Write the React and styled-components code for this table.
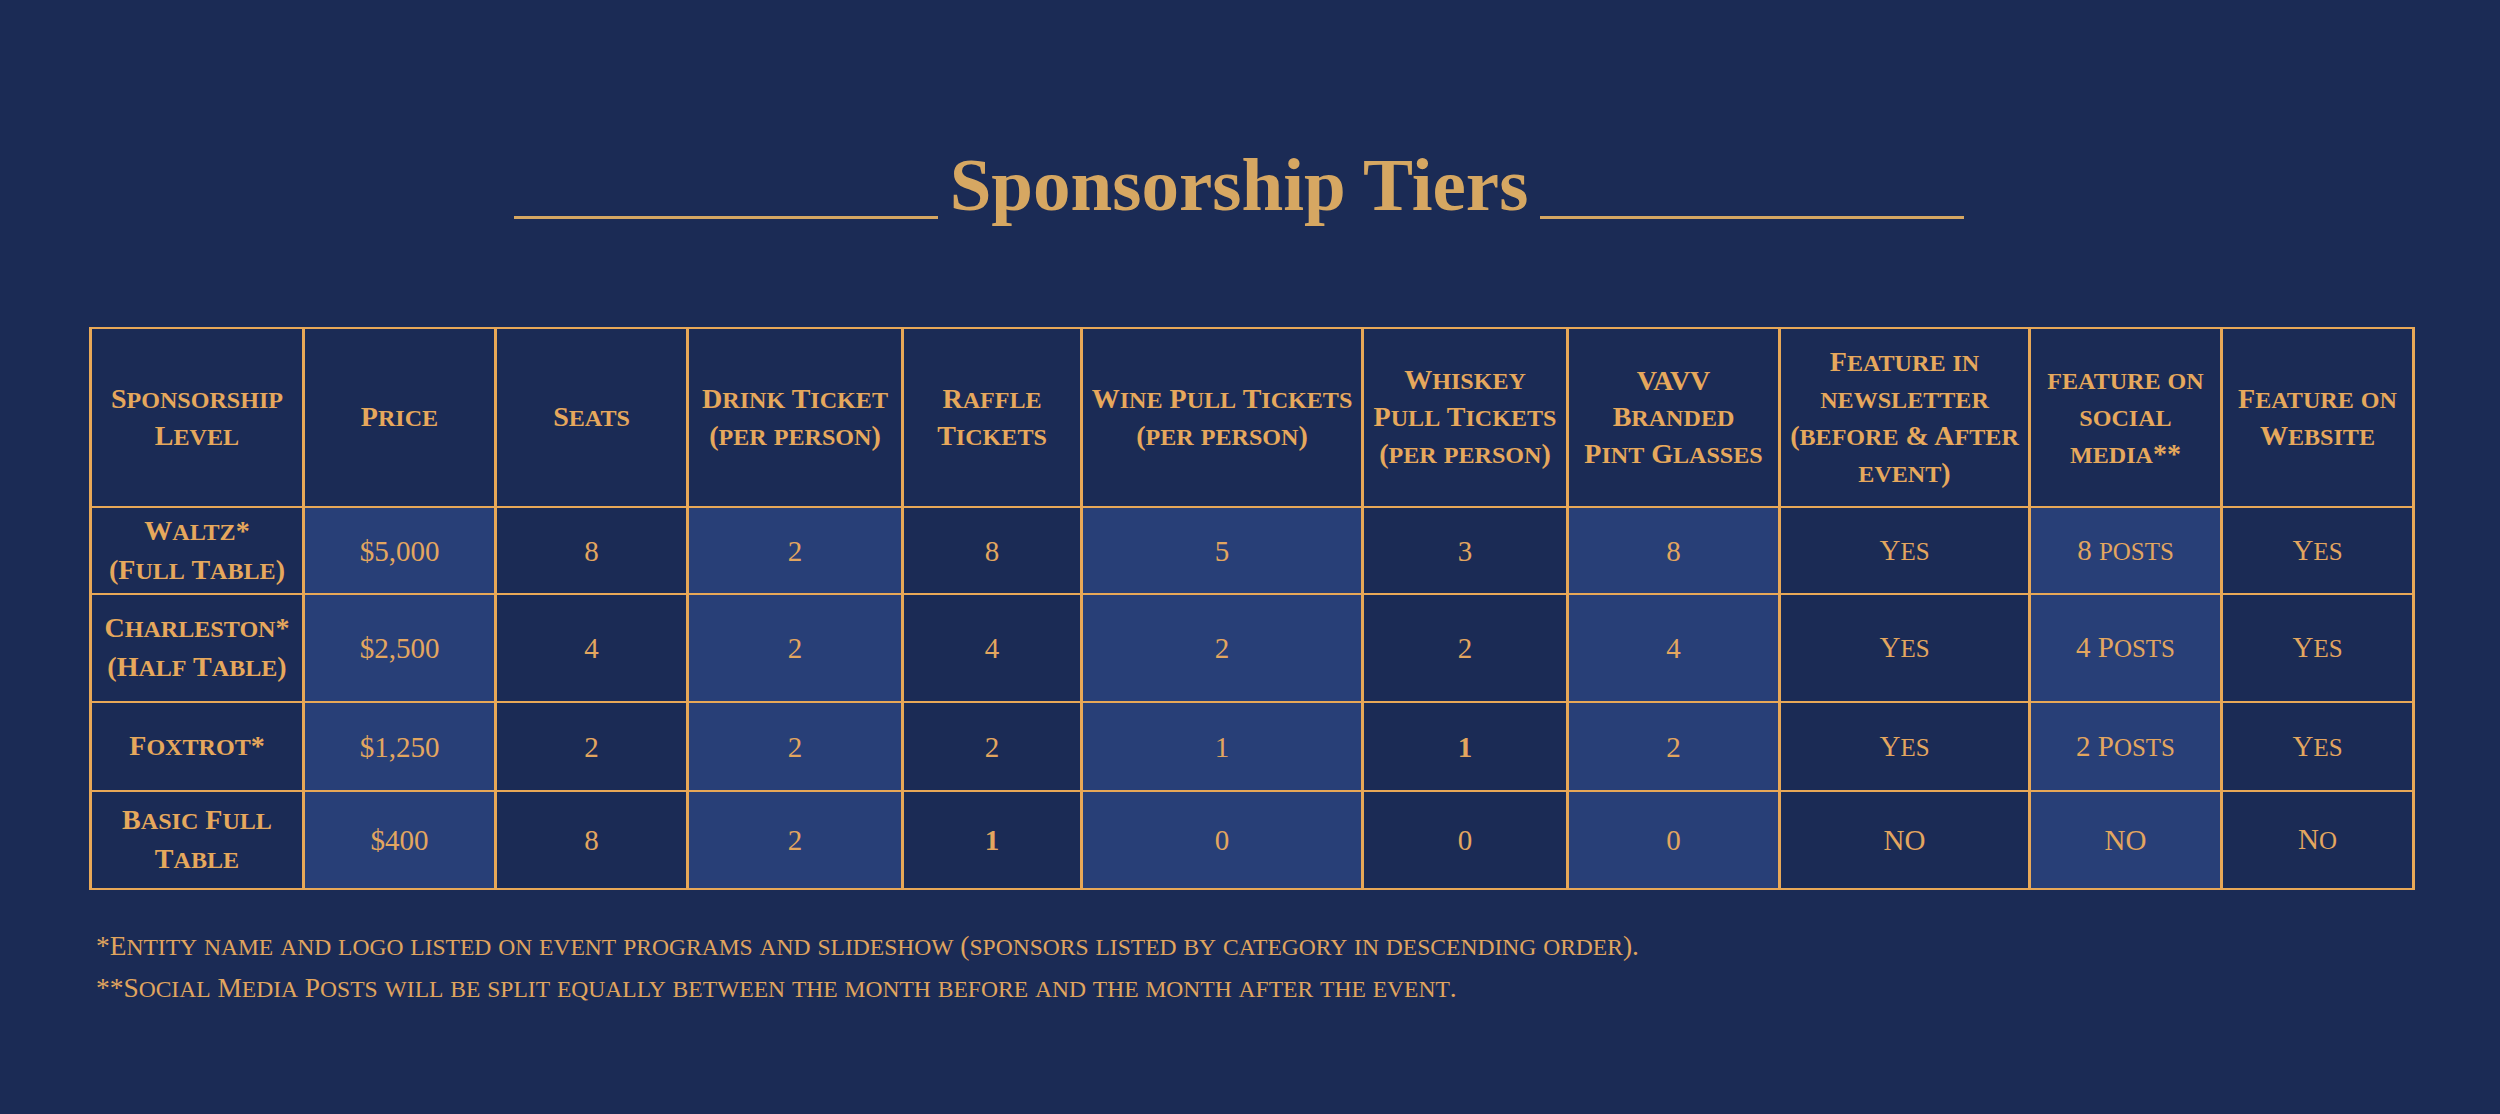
import React from 'react';
import styled, { createGlobalStyle } from 'styled-components';

const GlobalStyle = createGlobalStyle`
  html, body {
    margin: 0;
    padding: 0;
    background: #1b2b55;
  }
  body {
    font-family: "Liberation Serif", "Times New Roman", serif;
    color: #e6a85c;
  }
`;

const Page = styled.div`
  width: 2500px;
  min-height: 1114px;
  display: flex;
  flex-direction: column;
  background: #1b2b55;
`;

const TitleRow = styled.div`
  margin-top: 147px;
  padding-right: 22px;
  display: flex;
  justify-content: center;
  align-items: flex-end;
  gap: 12px;
`;

const Rule = styled.div`
  width: 424px;
  height: 3px;
  margin-bottom: 3px;
  background: #d6a762;
`;

const Title = styled.h1`
  margin: 0;
  font-family: "Liberation Serif", serif;
  font-weight: 700;
  font-size: 75px;
  line-height: 75px;
  color: #d6a762;
  white-space: nowrap;
`;

const Grid = styled.div`
  margin: 105px 0 0 89px;
  width: max-content;
  display: grid;
  grid-template-columns: 210px 189px 189px 212px 176px 278px 202px 209px 247px 189px 189px;
  grid-template-rows: 177px 85px 106px 87px 96px;
  gap: 2px 3px;
  padding: 2px 3px;
  background: #e8a857;
`;

const Cell = styled.div`
  display: flex;
  flex-direction: column;
  align-items: center;
  justify-content: center;
  text-align: center;
  white-space: nowrap;
  overflow: hidden;
  background: ${p => (p.$light ? '#283f77' : '#1b2b55')};
  color: #e6a85c;
`;

const HeadCell = styled(Cell)`
  font-weight: 700;
  font-size: 28px;
  line-height: 36px;
`;

const LevelCell = styled(Cell)`
  font-weight: 700;
  font-size: 28px;
  line-height: 38px;
`;

const DataCell = styled(Cell)`
  font-weight: ${p => (p.$bold ? 700 : 400)};
  font-size: 29px;
  line-height: 36px;
  color: #e3a65f;
`;

const Small = styled.span`
  font-size: 0.86em;
  text-transform: uppercase;
`;

const Notes = styled.div`
  margin: 36px 0 0 96px;
  font-size: 27.4px;
  line-height: 41px;
  color: #e0a55e;
`;

const Note = styled.p`
  margin: 0;
  white-space: nowrap;
`;

// capitals stay full size, lowercase runs become small capitals
const Caps = ({ text }) =>
  text.split(/([a-z]+)/).map((part, i) =>
    i % 2 ? <Small key={i}>{part}</Small> : <React.Fragment key={i}>{part}</React.Fragment>
  );

const Lines = ({ lines }) =>
  lines.map((l, i) => (
    <div key={i}>
      <Caps text={l} />
    </div>
  ));

const headers = [
  ['Sponsorship', 'Level'],
  ['Price'],
  ['Seats'],
  ['Drink Ticket', '(per person)'],
  ['Raffle', 'Tickets'],
  ['Wine Pull Tickets', '(per person)'],
  ['Whiskey', 'Pull Tickets', '(per person)'],
  ['VAVV', 'Branded', 'Pint Glasses'],
  ['Feature in', 'newsletter', '(before & After', 'event)'],
  ['feature on', 'social', 'media**'],
  ['Feature on', 'Website'],
];

const rows = [
  {
    level: ['Waltz*', '(Full Table)'],
    cells: ['$5,000', '8', '2', '8', '5', '3', '8', 'Yes', '8 posts', 'Yes'],
  },
  {
    level: ['Charleston*', '(Half Table)'],
    cells: ['$2,500', '4', '2', '4', '2', '2', '4', 'Yes', '4 Posts', 'Yes'],
  },
  {
    level: ['Foxtrot*'],
    cells: ['$1,250', '2', '2', '2', '1', '1', '2', 'Yes', '2 Posts', 'Yes'],
    bold: [5],
  },
  {
    level: ['Basic Full', 'Table'],
    cells: ['$400', '8', '2', '1', '0', '0', '0', 'NO', 'NO', 'No'],
    bold: [3],
  },
];

export default function App() {
  return (
    <Page>
      <GlobalStyle />
      <TitleRow>
        <Rule />
        <Title>Sponsorship Tiers</Title>
        <Rule />
      </TitleRow>

      <Grid>
        {headers.map((h, i) => (
          <HeadCell key={'h' + i}>
            <Lines lines={h} />
          </HeadCell>
        ))}
        {rows.map((r, ri) => (
          <React.Fragment key={ri}>
            <LevelCell>
              <Lines lines={r.level} />
            </LevelCell>
            {r.cells.map((c, ci) => (
              <DataCell
                key={ci}
                $light={ci % 2 === 0}
                $bold={r.bold && r.bold.includes(ci)}
              >
                <div>
                  <Caps text={c} />
                </div>
              </DataCell>
            ))}
          </React.Fragment>
        ))}
      </Grid>

      <Notes>
        <Note>
          <Caps text="*Entity name and logo listed on event programs and slideshow (sponsors listed by category in descending order)." />
        </Note>
        <Note>
          <Caps text="**Social Media Posts will be split equally between the month before and the month after the event." />
        </Note>
      </Notes>
    </Page>
  );
}
